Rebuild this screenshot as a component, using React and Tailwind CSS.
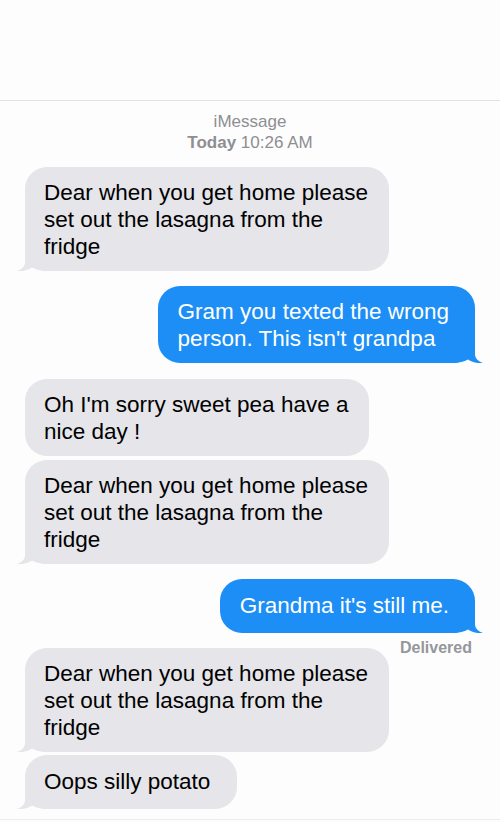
const GRAY = '#e5e5ea';
const BLUE = '#1d8ef5';

function Tail({ color, right }) {
  return (
    <svg
      width="30"
      height="22"
      viewBox="0 0 30 22"
      className={right ? 'absolute bottom-0 right-[-8px] -scale-x-100' : 'absolute bottom-0 left-[-8px]'}
    >
      <path d="M8 0 L8 13 C8 17 5 20.5 0 22 C6 22.6 11 21.2 15 18.6 C19 21 24 22 30 22 L30 0 Z" fill={color} />
    </svg>
  );
}

function Left({ lines, tail, className = '', pad = 'pt-[12px] pb-[11px] pr-[21px]' }) {
  return (
    <div className={`relative self-start ml-[25px] ${className}`}>
      <div className={`relative z-10 rounded-[22px] bg-[#e5e5ea] pl-[19px] ${pad} text-[22.5px] leading-[27px] text-black`}>
        {lines.map((l, i) => (
          <div key={i} className="whitespace-nowrap">{l}</div>
        ))}
      </div>
      {tail && <Tail color={GRAY} />}
    </div>
  );
}

function Right({ lines, className = '', pad = 'pt-[12px] pb-[11px]' }) {
  return (
    <div className={`relative self-end mr-[25px] ${className}`}>
      <div className={`relative z-10 rounded-[22px] bg-[#1d8ef5] pl-[20px] pr-[26px] ${pad} text-[22.5px] leading-[27px] text-white`}>
        {lines.map((l, i) => (
          <div key={i} className="whitespace-nowrap">{l}</div>
        ))}
      </div>
      <Tail color={BLUE} right />
    </div>
  );
}

export default function App() {
  const lasagna = ['Dear when you get home please', 'set out the lasagna from the', 'fridge'];

  return (
    <div className="w-[500px] h-[822px] bg-[#fdfdfd] overflow-hidden font-['Liberation_Sans',Arial,sans-serif]">
      <div className="h-[101px] border-b border-[#e2e2e4]" />

      <div className="flex flex-col h-[719px] border-b border-[#ececee]">
        <div className="pt-[10px] text-center text-[17px] leading-[21px] text-[#8e8e93]">
          <div>iMessage</div>
          <div>
            <span className="font-bold">Today</span> 10:26 AM
          </div>
        </div>

        <Left lines={lasagna} tail className="mt-[14px]" />
        <Right lines={['Gram you texted the wrong', "person. This isn't grandpa"]} className="mt-[15px]" />
        <Left lines={["Oh I'm sorry sweet pea have a", 'nice day !']} className="mt-[16px]" />
        <Left lines={lasagna} tail className="mt-[4px]" />
        <Right lines={["Grandma it's still me."]} className="mt-[15px]" pad="pt-[13px] pb-[14px]" />

        <div className="self-end mr-[28px] mt-[6px] text-[16px] leading-[18px] font-bold text-[#96969b]">
          Delivered
        </div>

        <Left lines={lasagna} tail className="-mt-[9px]" />
        <Left lines={['Oops silly potato']} tail className="mt-[3px]" pad="pt-[13px] pb-[14px] pr-[27px]" />
      </div>
    </div>
  );
}
